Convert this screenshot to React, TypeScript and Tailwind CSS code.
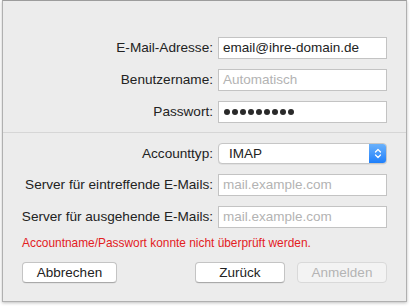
import React from "react";

const font = { fontFamily: '"Liberation Sans", Arial, sans-serif' };

function Label({ children }: { children: React.ReactNode }) {
  return (
    <div className="w-[215px] shrink-0 pr-[5px] text-right text-[13.6px] leading-[16px] text-[#222]">
      {children}
    </div>
  );
}

function Field({ label, children }: { label: string; children: React.ReactNode }) {
  return (
    <div className="flex items-center">
      <Label>{label}</Label>
      <div className="flex h-[22px] w-[169px] items-center border border-[#c3c3c3] bg-white pl-[4px] text-[13.5px] leading-[16px]">
        {children}
      </div>
    </div>
  );
}

function Button({ children, disabled, w }: { children: React.ReactNode; disabled?: boolean; w: string }) {
  return (
    <div
      className={`flex h-[21px] items-center justify-center rounded-[4px] border text-[13.5px] leading-[16px] ${w} ${
        disabled
          ? "border-[#d9d9d9] bg-[#f3f3f3] text-[#b4b4b4]"
          : "border-[#c4c4c4] border-b-[#a9a9a9] bg-white text-[#222] shadow-[0_0.5px_0.5px_rgba(0,0,0,0.08)]"
      }`}
    >
      {children}
    </div>
  );
}

export default function App() {
  return (
    <div className="h-[306px] w-[410px] bg-white" style={font}>
      <div className="ml-[2px] flex h-[302px] w-[405px] flex-col border border-[#b0b0b0] border-t-[#9c9c9c] bg-[#ececec] shadow-[0_1px_3px_rgba(0,0,0,0.25)]">
        <div className="flex flex-col gap-[10px] pt-[36px]">
          <Field label="E-Mail-Adresse:">
            <span className="text-[#222]">email@ihre-domain.de</span>
          </Field>
          <Field label="Benutzername:">
            <span className="text-[#b3b3b3]">Automatisch</span>
          </Field>
          <Field label="Passwort:">
            <div className="flex gap-[2px] pl-[1px]">
              {Array.from({ length: 9 }).map((_, i) => (
                <span key={i} className="h-[6px] w-[6px] rounded-full bg-[#2a2a2a]" />
              ))}
            </div>
          </Field>
        </div>
        <div className="mt-[9px] h-px bg-[#d6d6d6]" />
        <div className="mt-[10px] flex flex-col gap-[10px]">
          <div className="flex items-center">
            <Label>Accounttyp:</Label>
            <div className="flex h-[21px] w-[169px] overflow-hidden rounded-[4px] border border-[#c6c6c6] bg-white shadow-[0_0.5px_0.5px_rgba(0,0,0,0.1)]">
              <div className="flex flex-1 items-center pl-[10px] text-[13.5px] leading-[16px] text-[#222]">IMAP</div>
              <div className="flex w-[17px] items-center justify-center bg-gradient-to-b from-[#69b1fb] to-[#1c7ffb]">
                <svg width="8" height="13" viewBox="0 0 8 13" fill="none" stroke="white" strokeWidth="1.3" strokeLinecap="round" strokeLinejoin="round">
                  <path d="M1.5 5 L4 2.5 L6.5 5" />
                  <path d="M1.5 8 L4 10.5 L6.5 8" />
                </svg>
              </div>
            </div>
          </div>
          <Field label="Server für eintreffende E-Mails:">
            <span className="text-[#b3b3b3]">mail.example.com</span>
          </Field>
          <Field label="Server für ausgehende E-Mails:">
            <span className="text-[#b3b3b3]">mail.example.com</span>
          </Field>
        </div>
        <div className="mt-[8px] pl-[19px] text-[11.9px] leading-[15px] text-[#e3201e]">
          Accountname/Passwort konnte nicht überprüft werden.
        </div>
        <div className="mt-[11px] flex pl-[19px]">
          <Button w="w-[95px]">Abbrechen</Button>
          <div className="ml-[78px]">
            <Button w="w-[90px]">Zurück</Button>
          </div>
          <div className="ml-[12px]">
            <Button w="w-[90px]" disabled>
              Anmelden
            </Button>
          </div>
        </div>
      </div>
    </div>
  );
}
